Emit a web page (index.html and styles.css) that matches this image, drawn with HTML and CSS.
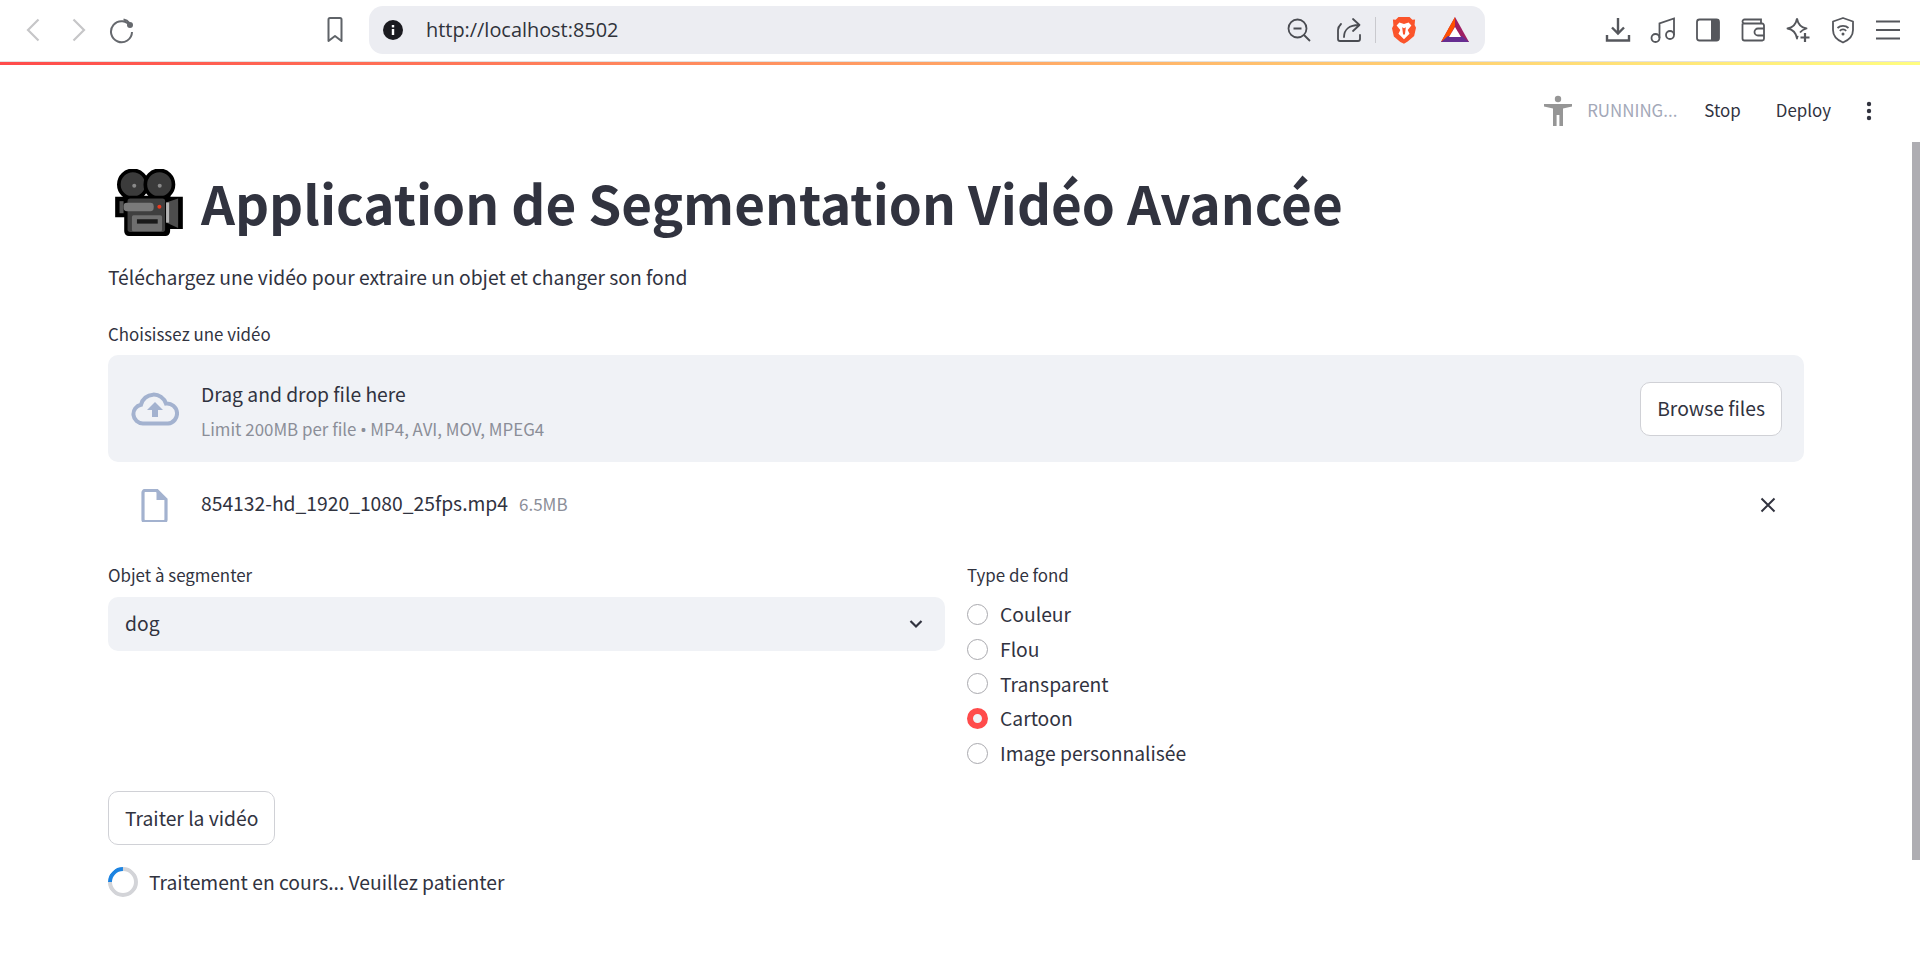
FILE: index.html
```html
<!DOCTYPE html>
<html lang="fr">
<head>
<meta charset="utf-8">
<title>Application de Segmentation Vidéo Avancée</title>
<link rel="stylesheet" href="styles.css">
</head>
<body>
<div class="chrome">
  <div class="nav">
    <svg class="ic" viewBox="0 0 28 28"><path d="M18.500 3.500 8 14l10.500 10.500" fill="none" stroke="#c6c6c8" stroke-width="2.200"/></svg>
    <svg class="ic" viewBox="0 0 28 28"><path d="M9.500 3.500 20 14 9.500 24.500" fill="none" stroke="#c6c6c8" stroke-width="2.200"/></svg>
    <svg class="ic" viewBox="0 0 28 28"><path d="M22.600 10.500A10.500 10.500 0 1 0 24 16" fill="none" stroke="#66696e" stroke-width="2"/><path d="M15.500 3.600a10.500 10.500 0 0 1 6 3.500" fill="none" stroke="#66696e" stroke-width="2"/><circle cx="22" cy="9" r="3" fill="#66696e"/></svg>
  </div>
  <svg class="ic bookmark" viewBox="0 0 28 28"><path d="M7.500 3.500a1.500 1.500 0 0 1 1.500-1.500h10a1.500 1.500 0 0 1 1.500 1.500v21.500l-6.500-5-6.500 5z" fill="none" stroke="#5f6368" stroke-width="2" stroke-linejoin="round"/></svg>
  <div class="omni">
    <svg class="info" viewBox="0 0 20 20"><circle cx="10" cy="10" r="10" fill="#1b1b20"/><rect x="8.800" y="9" width="2.400" height="6" fill="#fff"/><rect x="8.800" y="5" width="2.400" height="2.400" fill="#fff"/></svg>
    <span class="url">http://localhost:8502</span>
    <div class="omni-right">
      <svg class="ic" viewBox="0 0 28 28"><circle cx="12.500" cy="12.500" r="9" fill="none" stroke="#4a4c52" stroke-width="1.800"/><path d="M8.500 12.500h8M19 19l6 6" fill="none" stroke="#4a4c52" stroke-width="1.800"/></svg>
      <svg class="ic share" viewBox="0 0 28 28"><path d="M3 14v9a2 2 0 0 0 2 2h18a2 2 0 0 0 2-2v-4M3 14c0-2 1-4 3-6" fill="none" stroke="#4a4c52" stroke-width="1.800" stroke-linecap="round"/><path d="M9 21c0-7 5-12 15-12M18 3l6.500 6-6.500 6" fill="none" stroke="#4a4c52" stroke-width="1.800" stroke-linecap="round" stroke-linejoin="round"/></svg>
      <span class="sep"></span>
      <svg class="brave" viewBox="0 0 26 30"><path d="M7 1h12l3 3 3-.5-.5 6 1.500 3-2 9-7 6-4 2.500L9 28l-7-6-2-9 1.500-3L1 3.500 4 4z" fill="#fb542b"/><path d="M8 7l5 1.500L18 7l3 3-4 5 2 4-6 6-6-6 2-4-4-5z" fill="#fff"/><path d="M11 12l2 1 2-1-1 8h-2z" fill="#fb542b"/></svg>
      <svg class="bat" viewBox="0 0 30 28"><path d="M15 1 29 26H1z" fill="#9e1f63"/><path d="M15 1 1 26l7-3 7-13z" fill="#ff5000"/><path d="M1 26h28l-7-6H8z" fill="#662d91"/><path d="M15 11 21 21H9z" fill="#fff"/></svg>
    </div>
  </div>
  <div class="tools">
    <svg class="ic" viewBox="0 0 28 28"><path d="M14 2v15M8 11.500l6 6 6-6" fill="none" stroke="#55575c" stroke-width="2.400"/><path d="M3 19v5.500h22V19" fill="none" stroke="#55575c" stroke-width="2.400"/></svg>
    <svg class="ic" viewBox="0 0 28 28"><circle cx="6.500" cy="22" r="4" fill="none" stroke="#55575c" stroke-width="1.800"/><circle cx="21" cy="19" r="4" fill="none" stroke="#55575c" stroke-width="1.800"/><path d="M10.500 22V7.500L25 2.500V19" fill="none" stroke="#55575c" stroke-width="1.800"/></svg>
    <svg class="ic" viewBox="0 0 28 28"><rect x="3" y="3.500" width="22" height="21" rx="2.500" fill="none" stroke="#55575c" stroke-width="1.800"/><path d="M17 3.500h6a2 2 0 0 1 2 2v17a2 2 0 0 1-2 2h-6z" fill="#55575c"/></svg>
    <svg class="ic" viewBox="0 0 28 28"><path d="M3.500 7.500v15a2 2 0 0 0 2 2h18a2 2 0 0 0 1.500-2V9.500a2 2 0 0 0-2-2H5.500a2 2 0 0 1 0-4H22v4" fill="none" stroke="#55575c" stroke-width="1.800"/><path d="M25 12.500h-6a3 3 0 0 0 0 7h6" fill="none" stroke="#55575c" stroke-width="1.800"/></svg>
    <svg class="ic" viewBox="0 0 28 28"><path d="M13 2.500c1 6 3.500 9 9.500 10-3 .8-5 2-6.500 4M13 2.500c-1 6-3.500 9-9.500 10 6 1 8.500 4 9.500 10 .2-1 .5-2 .8-2.800" fill="none" stroke="#55575c" stroke-width="1.800" stroke-linejoin="round"/><path d="M21 17v9M16.500 21.500h9" stroke="#55575c" stroke-width="2.200"/></svg>
    <svg class="ic" viewBox="0 0 28 28"><path d="M14 2 4 5.500V14c0 6 4 10 10 12.500C20 24 24 20 24 14V5.500z" fill="none" stroke="#55575c" stroke-width="1.800" stroke-linejoin="round"/><path d="M8.500 12a8 8 0 0 1 11 0M10.800 14.800a4.500 4.500 0 0 1 6.400 0" fill="none" stroke="#55575c" stroke-width="1.800"/><circle cx="14" cy="18" r="1.500" fill="#55575c"/></svg>
    <svg class="ic" viewBox="0 0 28 28"><path d="M2 5.500h24M2 14h24M2 22.500h24" stroke="#55575c" stroke-width="2"/></svg>
  </div>
</div>
<div class="decoration"></div>
<div class="app">
  <header class="app-header">
    <svg class="person" viewBox="0 0 32 32"><circle cx="16" cy="4" r="3.200" fill="#969696"/><path d="M2 9h28v2.600l-9 1.800V31h-3.600v-11h-2.800v11H11V13.400l-9-1.800z" fill="#969696"/></svg>
    <span class="running">RUNNING...</span>
    <span class="hbtn stop">Stop</span>
    <span class="hbtn deploy">Deploy</span>
    <svg class="kebab" viewBox="0 0 6 20"><circle cx="3" cy="3" r="2.200" fill="#31333f"/><circle cx="3" cy="10" r="2.200" fill="#31333f"/><circle cx="3" cy="17" r="2.200" fill="#31333f"/></svg>
  </header>
  <main class="main">
    <h1 class="title">
      <svg class="emoji" viewBox="45 62 202 200"><circle cx="98" cy="108" r="42" fill="#3b3b3b" stroke="#000" stroke-width="11"/><circle cx="177" cy="108" r="42" fill="#3b3b3b" stroke="#000" stroke-width="11"/><path d="M45 145h25v-3h140v3h37v96h-38v7a14 14 0 0 1-14 14H86a14 14 0 0 1-14-14v-42H45z" fill="#000"/><rect x="82" y="150" width="112" height="100" rx="8" fill="#3f3f3f"/><rect x="70" y="163" width="90" height="25" rx="10" fill="#7a7a7a"/><rect x="58" y="158" width="12" height="36" fill="#555"/><path d="M197 162l36-12v88l-36-16z" fill="#4d4d4d"/><rect x="197" y="162" width="9" height="60" fill="#b5b5b5"/><circle cx="102" cy="112" r="6" fill="#8a8a8a"/><circle cx="178" cy="112" r="6" fill="#8a8a8a"/><circle cx="177" cy="175" r="6" fill="#e8391d"/><rect x="95" y="200" width="90" height="48" rx="5" fill="#6f6f6f"/><rect x="110" y="212" width="62" height="13" fill="#1a1a1a"/></svg>
      <span>Application de Segmentation Vidéo Avancée</span>
    </h1>
    <p class="subtitle">Téléchargez une vidéo pour extraire un objet et changer son fond</p>
    <label class="label upload-label">Choisissez une vidéo</label>
    <section class="dropzone">
      <svg class="cloud" viewBox="0 0 48 34"><path d="M12 31.500a9.500 9.500 0 0 1-2-18.800 13 13 0 0 1 25-1.200A10 10 0 0 1 37 31.500z" fill="none" stroke="#a3b2cf" stroke-width="4"/><path d="M24 10l8 8h-5v7h-6v-7h-5z" fill="#a3b2cf"/></svg>
      <div class="drop-text">
        <div class="drop-title">Drag and drop file here</div>
        <div class="drop-limit">Limit 200MB per file <span class="bullet">•</span> MP4, AVI, MOV, MPEG4</div>
      </div>
      <button class="btn">Browse files</button>
    </section>
    <section class="file-row">
      <svg class="file-ic" viewBox="0 0 27 33"><path d="M2 3.500a2 2 0 0 1 2-2h12l9 9v20a2 2 0 0 1-2 2H4a2 2 0 0 1-2-2z" fill="none" stroke="#a3b2cf" stroke-width="3.200"/><path d="M15.500 1.500v9.500h9.500z" fill="#a3b2cf"/></svg>
      <span class="file-name">854132-hd_1920_1080_25fps.mp4</span>
      <span class="file-size">6.5MB</span>
      <svg class="close" viewBox="0 0 16 16"><path d="M1.500 1.500l13 13M14.500 1.500l-13 13" stroke="#31333f" stroke-width="2"/></svg>
    </section>
    <section class="columns">
      <div>
        <label class="label">Objet à segmenter</label>
        <div class="select"><span class="select-value">dog</span><svg class="chev" viewBox="0 0 14 10"><path d="M1.500 2l5.500 5.500L12.500 2" fill="none" stroke="#31333f" stroke-width="2.200"/></svg></div>
      </div>
      <div>
        <label class="label">Type de fond</label>
        <div class="radios">
          <div class="radio"><span class="dot"></span>Couleur</div>
          <div class="radio"><span class="dot"></span>Flou</div>
          <div class="radio"><span class="dot"></span>Transparent</div>
          <div class="radio"><span class="dot on"></span>Cartoon</div>
          <div class="radio"><span class="dot"></span>Image personnalisée</div>
        </div>
      </div>
    </section>
    <button class="btn process">Traiter la vidéo</button>
    <div class="spin-row"><span class="spinner"></span>Traitement en cours... Veuillez patienter</div>
  </main>
  <div class="scrollbar"></div>
</div>
</body>
</html>
```

FILE: styles.css
```css
* { box-sizing: border-box; }
html, body { margin: 0; height: 100%; overflow: hidden; background: #fff; }
body { font-family: "Noto Sans CJK SC", "Noto Sans", sans-serif; color: #31333f; font-size: 19.300px; display: flex; flex-direction: column; }

.chrome { height: 62px; flex: none; display: flex; align-items: center; padding: 0 18px 2px 20px; background: #fff; border-bottom: 1px solid #e2e2e2; }
.nav { display: flex; width: 213px; flex: none; }
.nav .ic { margin-right: 16px; }
.ic { width: 28px; height: 28px; flex: none; display: block; }
.bookmark { margin: 0 0 0 88px; }
.omni { width: 1116px; height: 48px; margin-left: 20px; flex: none; background: #ecedf2; border-radius: 14px; display: flex; align-items: center; padding: 0 15px 0 14px; }
.info { width: 20px; height: 20px; flex: none; }
.url { margin-left: 23px; font-family: "Open Sans", sans-serif; font-size: 19.900px; color: #30333b; }
.omni-right { margin-left: auto; display: flex; align-items: center; }
.share { margin-left: 22px; }
.sep { width: 1px; height: 26px; background: #c9c9ce; margin: 0 16px 0 12px; }
.brave { width: 24px; height: 30px; }
.bat { width: 30px; height: 28px; margin-left: 24px; }
.tools { margin-left: auto; display: flex; gap: 17px; }

.decoration { height: 3px; flex: none; background: linear-gradient(90deg, #ff4b4b, #fffd80); }

.app { flex: 1; position: relative; min-height: 0; }
.app-header { height: 91px; display: flex; align-items: center; padding-right: 48px; }
.person { width: 32px; height: 32px; margin-left: auto; }
.running { margin-left: 13px; font-size: 16.900px; color: #a3a8b8; line-height: 1; }
.hbtn { font-size: 16.900px; line-height: 1; }
.stop { margin-left: 27px; }
.deploy { margin-left: 35px; }
.kebab { width: 6px; height: 20px; margin-left: 35px; }

.main { padding: 0 116px 0 108px; }
.title { margin: 11px 0 0; display: flex; align-items: center; font-size: 53px; font-weight: 700; line-height: 70px; height: 70px; }
.emoji { width: 68px; height: 67px; margin: 0 18px 0 7px; flex: none; }
.subtitle { margin: 23px 0 0; line-height: 34px; }
.label { display: block; font-size: 16.900px; line-height: 24px; }
.upload-label { margin-top: 28px; }
.dropzone { margin-top: 9px; height: 107px; background: #f0f2f6; border-radius: 10px; display: flex; align-items: center; padding: 0 22px 0 23px; }
.cloud { width: 48px; height: 34px; flex: none; }
.drop-text { margin-left: 22px; flex: 1; padding-top: 4px; }
.drop-title { line-height: 28px; }
.drop-limit { font-size: 16.900px; line-height: 24px; margin-top: 9px; color: #8b8e98; }
.bullet { font-family: "Noto Sans", sans-serif; }
.btn { font: inherit; color: #31333f; background: #fff; border: 1px solid #d0d1d6; border-radius: 10px; height: 54px; padding: 0 16px; line-height: 1; }
.file-row { height: 62px; margin-top: 12px; display: flex; align-items: center; padding-left: 33px; padding-right: 28px; }
.file-ic { width: 27px; height: 33px; flex: none; }
.file-name { margin-left: 33px; margin-bottom: 4px; }
.file-size { margin-left: 11px; margin-bottom: 4px; font-size: 17px; color: #8b8e98; }
.close { width: 16px; height: 16px; margin-left: auto; }
.columns { display: grid; grid-template-columns: 1fr 1fr; gap: 22px; margin-top: 27px; }
.select { margin-top: 10px; height: 54px; background: #f0f2f6; border-radius: 10px; display: flex; align-items: center; justify-content: space-between; padding: 0 22px 0 17px; }
.select-value { margin-bottom: 2px; }
.chev { width: 14px; height: 10px; }
.radios { margin-top: 10px; display: flex; flex-direction: column; }
.radio { height: 34.700px; display: flex; align-items: center; }
.dot { width: 21px; height: 21px; border-radius: 50%; border: 1px solid #a9a9ae; background: #fff; margin-right: 12px; flex: none; }
.dot.on { background: #f0f2f6; border: 6.500px solid #ff4b4b; }
.process { display: block; margin-top: 21px; }
.spin-row { margin-top: 22px; display: flex; align-items: center; line-height: 30px; }
.spinner { width: 30px; height: 30px; border-radius: 50%; border: 4px solid #d3d4d8; border-top-color: #1c83e1; transform: rotate(-45deg); margin-right: 11px; flex: none; }
.scrollbar { position: absolute; right: 0; top: 77px; width: 8px; height: 718px; background: #aeadb2; }
```
